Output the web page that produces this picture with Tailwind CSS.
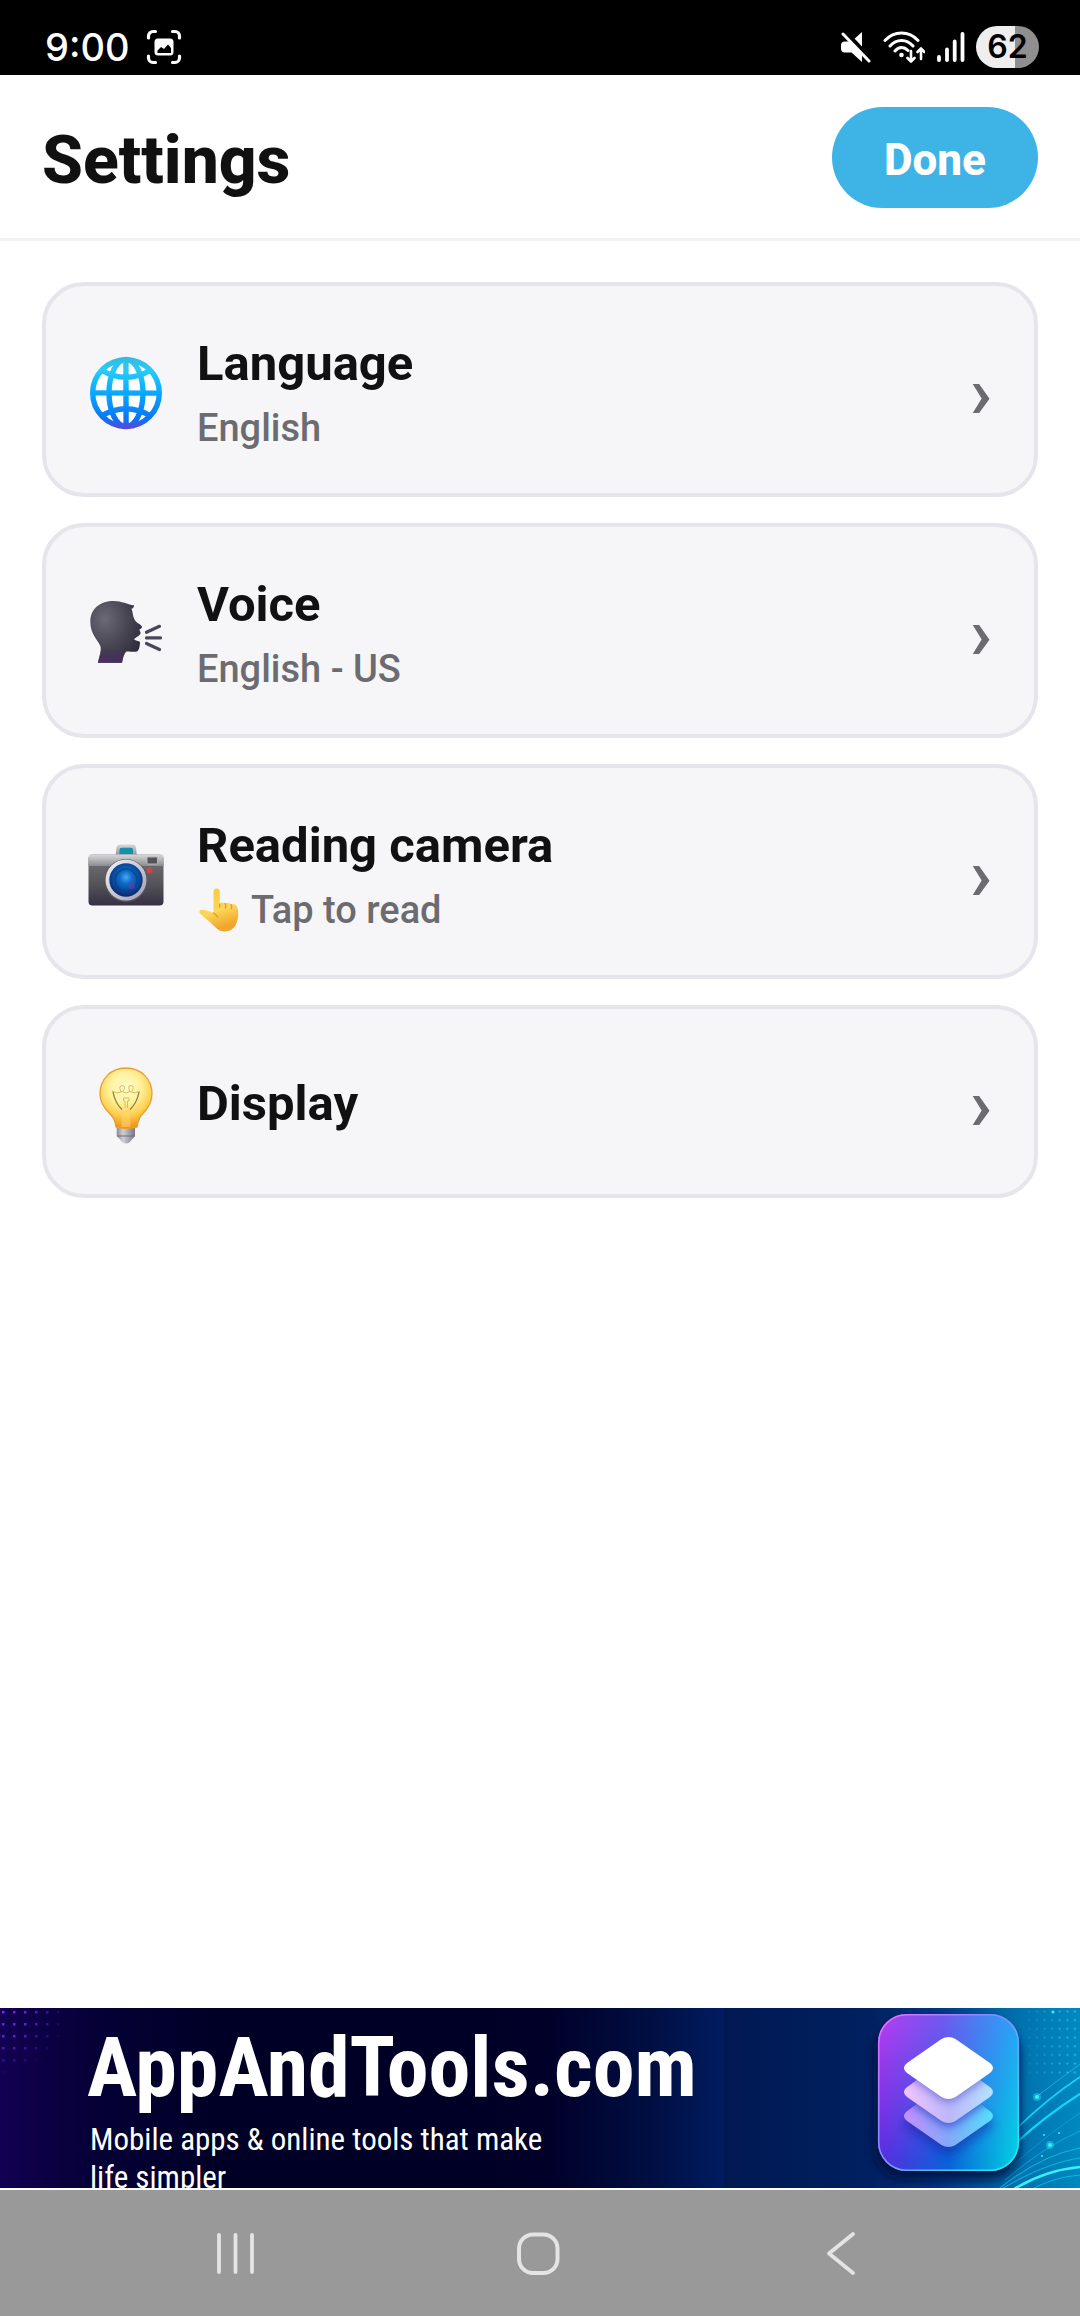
<!DOCTYPE html>
<html lang="en">
<head>
    <meta charset="UTF-8">
    <meta name="viewport" content="width=device-width, initial-scale=1.0">
    <title>Settings</title>
    <script src="https://cdn.jsdelivr.net/npm/@tailwindcss/browser@4"></script>
</head>
<body class="min-h-screen flex flex-col bg-white text-[#111111] font-['Roboto',sans-serif]">

    <!-- Status bar -->
    <div class="h-[75px] bg-black text-white pl-[45px] pr-[41px] pt-[19px] flex items-center justify-between font-['Inter',sans-serif]">
        <div class="flex items-center gap-[16px]">
            <span class="text-[38px] leading-[56px] font-medium">9:00</span>
            <svg class="w-[36px] h-[36px]" viewBox="0 0 36 36" fill="none" stroke="#fff" stroke-width="3.2" stroke-linecap="round">
                <path d="M2.500 9V7a4.500 4.500 0 0 1 4.500-4.500h2.500M26.500 2.500H29a4.500 4.500 0 0 1 4.500 4.500v2M33.500 27v2a4.500 4.500 0 0 1-4.500 4.500h-2.500M9.500 33.500H7A4.500 4.500 0 0 1 2.500 29v-2"/>
                <rect x="8.500" y="9.500" width="19" height="17" rx="3.500" fill="#fff" stroke="none"/>
                <path d="M11.500 24v-2.500l3.500-3.500 3 2 4-4.500 3 3.500v5z" fill="#000" stroke="none"/>
            </svg>
        </div>
        <div class="flex items-center gap-[11px]">
            <svg class="w-[32px] h-[32px]" viewBox="0 0 32 32">
                <path d="M22 1v30L11.500 21.500H5a4 4 0 0 1-4-4v-3a4 4 0 0 1 4-4h6.500z" fill="#fff"/>
                <path d="M5 1l27 29" stroke="#000" stroke-width="5"/>
                <path d="M3 3l26 27" stroke="#fff" stroke-width="3" stroke-linecap="round"/>
            </svg>
            <svg class="w-[42px] h-[32px]" viewBox="0 0 42 32" fill="none" stroke="#fff" stroke-width="3" stroke-linecap="round" stroke-linejoin="round">
                <path d="M2 9.500C11 -.500 26 -.500 35 9.500M7 15C13.500 7.500 23.500 7.500 30 15M12 20c4-4.500 9-4.500 13-.500"/>
                <circle cx="18.500" cy="24" r="2.300" fill="#fff" stroke="none"/>
                <path d="M28 20v10M24.500 27l3.500 3.500 3.500-3.500M38 28V18M34.500 21l3.500-3.500 3.500 3.500" stroke-width="2.600"/>
            </svg>
            <svg class="w-[29px] h-[32px]" viewBox="0 0 29 32" stroke="#fff" stroke-width="3.800" stroke-linecap="round">
                <path d="M3 26v3M11 18.500V29M18.700 10.500V29M26.500 3v26"/>
            </svg>
            <span class="w-[63px] h-[42px] rounded-full bg-linear-to-r from-[#eeeeee] from-62% to-[#8f8f8f] to-62% text-black text-[32px] leading-[42px] font-semibold text-center">62</span>
        </div>
    </div>

    <!-- Header -->
    <header class="h-[166px] px-[42px] pt-[2px] border-b-3 border-[#f2f2f4] flex items-center justify-between">
        <h1 class="pt-[6px] text-[66px] leading-[78px] font-extrabold">Settings</h1>
        <button type="button" class="h-[101px] px-[52px] pt-1 rounded-full bg-[#3db3e6] text-white text-[44px] font-extrabold">Done</button>
    </header>

    <main class="flex-1 px-[42px] pt-[41px] flex flex-col gap-[26px]">
        <button type="button" class="w-full pt-[42px] pb-[41px] px-[42px] rounded-[42px] border-4 border-[#e5e5ec] bg-[#f6f6f9] flex items-center gap-[33px] text-left">
            <svg class="w-[76px] h-[84px]" viewBox="0 0 76 84" fill="none">
                <defs>
                    <linearGradient id="globe" gradientUnits="userSpaceOnUse" x1="0" y1="9" x2="0" y2="82">
                        <stop offset="0" stop-color="#35b9e0"/>
                        <stop offset=".18" stop-color="#27ccf8"/>
                        <stop offset=".5" stop-color="#08a8ff"/>
                        <stop offset=".85" stop-color="#0b74f2"/>
                        <stop offset="1" stop-color="#6a3fd6"/>
                    </linearGradient>
                </defs>
                <circle cx="38" cy="45" r="33.500" fill="#fff"/>
                <g stroke="url(#globe)" stroke-width="5.400">
                    <circle cx="38" cy="45" r="33.300"/>
                    <ellipse cx="38" cy="45" rx="17" ry="33.500"/>
                    <path d="M4 44.900L72 45.100M37.900 12L38.100 79M13 22Q38 36.500 63 22M13 68Q38 53.500 63 68"/>
                </g>
            </svg>
            <span class="flex-1 pt-1">
                <span class="block text-[49px] leading-[64px] font-bold">Language</span>
                <span class="block mt-2 text-[38px] leading-[48px] font-medium text-[#6c6c70]">English</span>
            </span>
            <span class="pt-[6px] text-[74px] leading-[72px] font-semibold text-[#6c6c70]">›</span>
        </button>

        <button type="button" class="w-full pt-[42px] pb-[41px] px-[42px] rounded-[42px] border-4 border-[#e5e5ec] bg-[#f6f6f9] flex items-center gap-[33px] text-left">
            <svg class="w-[76px] h-[84px]" viewBox="0 0 76 84" fill="none">
                <defs>
                    <radialGradient id="head" cx=".28" cy=".3" r=".8">
                        <stop offset="0" stop-color="#6b6975"/>
                        <stop offset=".55" stop-color="#484653"/>
                        <stop offset="1" stop-color="#2f2b3d"/>
                    </radialGradient>
                    <linearGradient id="neck" x1="0" y1="0" x2="0" y2="1">
                        <stop offset=".1" stop-color="#4a2f63" stop-opacity="0"/>
                        <stop offset="1" stop-color="#4a2f63"/>
                    </linearGradient>
                </defs>
                <path d="M10 73.700C11.500 67 13.500 61 12.500 57.500C11 52 2.300 46 2.300 32.700C2.300 19 13 12 25.500 12C34 12 39 15.500 46 16.300C46 18.500 45 19.500 43.500 19.800C45 23 44.500 27 46.500 30.500C48 33.500 51 34.500 53.700 37C54.500 38.500 53 40 51.300 40.500C51.500 42 53 43 52.500 44.500C51.500 47 48 48 46 50.300C48 52 50 52 52 52.700C52 56 51.500 60 49.500 62.200C46 63.500 41 62 38.500 62.500C36 64.500 35 69 34 73.700Z" fill="url(#head)"/>
                <path d="M10 73.700C11.500 67 13.500 61 12.500 57.500L38.500 62.500C36 64.500 35 69 34 73.700Z" fill="url(#neck)"/>
                <path d="M58.500 43.300L71.500 37.300M58.500 48.900H72.500M58.500 54.500L71.500 60.500" stroke="#494659" stroke-width="3.200" stroke-linecap="round"/>
            </svg>
            <span class="flex-1 pt-1">
                <span class="block text-[49px] leading-[64px] font-bold">Voice</span>
                <span class="block mt-2 text-[38px] leading-[48px] font-medium text-[#6c6c70]">English - US</span>
            </span>
            <span class="pt-[6px] text-[74px] leading-[72px] font-semibold text-[#6c6c70]">›</span>
        </button>

        <button type="button" class="w-full pt-[42px] pb-[41px] px-[42px] rounded-[42px] border-4 border-[#e5e5ec] bg-[#f6f6f9] flex items-center gap-[33px] text-left">
            <svg class="w-[76px] h-[84px]" viewBox="0 0 76 84" fill="none">
                <defs>
                    <linearGradient id="camTop" x1="0" y1="0" x2="0" y2="1">
                        <stop offset="0" stop-color="#d9d9dc"/>
                        <stop offset="1" stop-color="#8c8c90"/>
                    </linearGradient>
                    <linearGradient id="camBody" x1="0" y1="0" x2="0" y2="1">
                        <stop offset="0" stop-color="#77777a"/>
                        <stop offset=".6" stop-color="#525257"/>
                        <stop offset="1" stop-color="#353044"/>
                    </linearGradient>
                    <linearGradient id="camRing" x1="0" y1="0" x2="1" y2="1">
                        <stop offset="0" stop-color="#f4f4f8"/>
                        <stop offset="1" stop-color="#9e9dae"/>
                    </linearGradient>
                    <radialGradient id="camLens" cx=".5" cy=".42" r=".55">
                        <stop offset="0" stop-color="#4aa8ee"/>
                        <stop offset=".35" stop-color="#0b6cc8"/>
                        <stop offset=".75" stop-color="#07479b"/>
                        <stop offset="1" stop-color="#12296f"/>
                    </radialGradient>
                </defs>
                <path d="M27.500 26L28.500 17.500Q29 14.500 32 14.500H44.500Q47.500 14.500 48 17.500L49 26Z" fill="url(#camTop)"/>
                <path d="M31.500 24.500V20Q31.500 17.800 33.500 17.800H43Q45 17.800 45 20V24.500Z" fill="#1590ad"/>
                <rect x=".500" y="24.500" width="75" height="51" rx="4" fill="url(#camBody)"/>
                <path d="M.500 36V28.500Q.500 24.500 4.500 24.500H71.500Q75.500 24.500 75.500 28.500V36Z" fill="url(#camTop)"/>
                <rect x="59" y="27" width="10.500" height="7" rx="1" fill="#525257" stroke="#b8b8bc"/>
                <circle cx="61.500" cy="40.500" r="3" fill="#d3434c"/>
                <circle cx="38" cy="50.500" r="21.500" fill="#55555a"/>
                <circle cx="38" cy="50" r="20.500" fill="url(#camRing)"/>
                <circle cx="38" cy="50" r="16.700" fill="url(#camLens)"/>
                <circle cx="38" cy="50" r="11" stroke="#083e80" stroke-width="1.500" opacity=".7"/>
                <circle cx="43.500" cy="55.500" r="3.500" fill="#5b42b8" opacity=".6"/>
            </svg>
            <span class="flex-1 pt-1">
                <span class="block text-[49px] leading-[64px] font-bold">Reading camera</span>
                <span class="mt-2 flex items-center gap-[12px] pl-[2px] text-[38px] leading-[48px] font-medium text-[#6c6c70]">
                    <svg class="w-[40px] h-[44px]" viewBox="0 0 40 44">
                        <defs>
                            <linearGradient id="hand" x1="0" y1="0" x2=".3" y2="1">
                                <stop offset="0" stop-color="#fbc83e"/>
                                <stop offset=".6" stop-color="#fdd658"/>
                                <stop offset="1" stop-color="#f0a52b"/>
                            </linearGradient>
                        </defs>
                        <path d="M14.500 25V4Q14.500 .500 17.500 .500Q20.800 .500 20.800 4V16Q23 13.500 26 15.500Q29.500 13.500 32 16.500Q36 15 38 18.500C40 23 39.500 30 37.500 35C35.500 40.500 31 43.500 26 43.500C20 43.500 17 40 13.500 36.500C10 33 5 29.500 1 25.500C-.500 23.500 1 21.500 3.500 21.800C7.500 22.300 11 23.300 14.500 25Z" fill="url(#hand)"/>
                        <path d="M20.800 16V19M26 15.500Q27.300 17.500 26.500 20M32 16.500Q33.500 18.500 32.500 21M14.500 25Q17 26.500 18.500 29" fill="none" stroke="#e39a22" stroke-width="1.300" stroke-linecap="round"/>
                    </svg>
                    Tap to read
                </span>
            </span>
            <span class="pt-[6px] text-[74px] leading-[72px] font-semibold text-[#6c6c70]">›</span>
        </button>

        <button type="button" class="w-full min-h-[193px] px-[42px] rounded-[42px] border-4 border-[#e5e5ec] bg-[#f6f6f9] flex items-center gap-[33px] text-left">
            <svg class="w-[76px] h-[84px]" viewBox="0 0 76 84" fill="none">
                <defs>
                    <radialGradient id="bulb" gradientUnits="userSpaceOnUse" cx="37" cy="28" r="40">
                        <stop offset="0" stop-color="#fffbd0"/>
                        <stop offset=".4" stop-color="#fff19a"/>
                        <stop offset=".68" stop-color="#fcd052"/>
                        <stop offset="1" stop-color="#f0901a"/>
                    </radialGradient>
                    <linearGradient id="cap" x1="0" y1="0" x2="1" y2="0">
                        <stop offset="0" stop-color="#8d8b97"/>
                        <stop offset=".35" stop-color="#d0cfd6"/>
                        <stop offset="1" stop-color="#777581"/>
                    </linearGradient>
                </defs>
                <path d="M28.700 66H47V76L43 80.500Q41.500 83.500 38 83.500Q34.500 83.500 33 80.500L28.700 76Z" fill="url(#cap)"/>
                <path d="M29 76H47" stroke="#6f6d7b" stroke-width="1"/>
                <path d="M12 34C12 19 23 8 38 8C53 8 64 19 64 34C64 43 59.500 49 54.500 54C50.500 58 50 61.500 49 67Q38 69.500 28 67C27 61.500 26.500 58 22 54C17 49 12 43 12 34Z" fill="url(#bulb)" stroke="#e5a02f" stroke-width="1.300"/>
                <path d="M33.500 50H42.500V67H33.500Z" fill="#ffd66e" opacity=".55"/>
                <path d="M25 32Q27 43 34 49.500M51 32Q49 43 42 49.500" stroke="#8a7a45" stroke-width="1.300"/>
                <path d="M24 31L29 33L34 31.500L38 33L42 31.500L47 33L52 31M33 32Q30 25.500 34.500 25.500Q38 26 35.500 31M42 32Q39 25.500 43 25.500Q47 26 44 31M35.500 38H41V41H39.500V48M35.500 38V41H37V48" stroke="#d6bd58" stroke-width="1"/>
            </svg>
            <span class="flex-1 pt-1 text-[49px] leading-[64px] font-bold">Display</span>
            <span class="pt-[6px] text-[74px] leading-[72px] font-semibold text-[#6c6c70]">›</span>
        </button>
    </main>

    <!-- Ad banner -->
    <a href="#" class="relative block h-[180px] overflow-hidden bg-[#00002a] text-white">
        <svg class="absolute inset-0 w-full h-full" viewBox="0 0 1080 180" preserveAspectRatio="xMaxYMid slice" fill="none">
            <defs>
                <linearGradient id="bgLeft" x1="0" y1="0" x2="1" y2="0">
                    <stop offset="0" stop-color="#120052"/>
                    <stop offset=".13" stop-color="#060036"/>
                    <stop offset=".3" stop-color="#000026"/>
                    <stop offset=".75" stop-color="#000028"/>
                    <stop offset=".9" stop-color="#000f42"/>
                    <stop offset="1" stop-color="#001c60"/>
                </linearGradient>
                <linearGradient id="bgRight" x1="0" y1="0" x2="1" y2="0">
                    <stop offset="0" stop-color="#001953"/>
                    <stop offset=".4" stop-color="#00205f"/>
                    <stop offset=".6" stop-color="#00357f"/>
                    <stop offset=".82" stop-color="#0070ad"/>
                    <stop offset="1" stop-color="#0089c0"/>
                </linearGradient>
                <radialGradient id="fade" gradientUnits="userSpaceOnUse" cx="0" cy="0" r="76">
                    <stop offset="0" stop-color="#fff"/>
                    <stop offset=".4" stop-color="#ccc"/>
                    <stop offset=".9" stop-color="#000"/>
                </radialGradient>
                <linearGradient id="fadeRight" x1="1" y1="0" x2="0" y2="0">
                    <stop offset="0" stop-color="#fff"/>
                    <stop offset="1" stop-color="#333"/>
                </linearGradient>
                <pattern id="dots" width="11" height="12" patternUnits="userSpaceOnUse">
                    <rect x="2" y="3" width="2.500" height="2.500" fill="#8420ff"/>
                </pattern>
                <pattern id="dotsRight" x="1004" width="7.600" height="8.700" patternUnits="userSpaceOnUse">
                    <circle cx="2.500" cy="3.500" r="1" fill="#2fd0e8"/>
                </pattern>
                <mask id="m1"><rect width="76" height="76" fill="url(#fade)"/></mask>
                <mask id="m2"><rect x="1028" width="52" height="68" fill="url(#fadeRight)"/></mask>
                <linearGradient id="tileA" x1="0" y1="0" x2="1" y2="0">
                    <stop offset="0" stop-color="#b23cf0"/>
                    <stop offset=".45" stop-color="#6d58ef"/>
                    <stop offset="1" stop-color="#23a8f6"/>
                </linearGradient>
                <linearGradient id="tileB" x1="0" y1="0" x2="1" y2="0">
                    <stop offset="0" stop-color="#5a2be0"/>
                    <stop offset=".5" stop-color="#0a63da"/>
                    <stop offset="1" stop-color="#00d2e0"/>
                </linearGradient>
                <linearGradient id="down" x1="0" y1="0" x2="0" y2="1">
                    <stop offset=".1" stop-color="#000"/>
                    <stop offset=".85" stop-color="#fff"/>
                </linearGradient>
                <mask id="m3"><rect x="870" width="160" height="180" fill="url(#down)"/></mask>
                <linearGradient id="rim" x1="0" y1="0" x2="1" y2="1">
                    <stop offset="0" stop-color="#ec6bff"/>
                    <stop offset=".45" stop-color="#7f8cff"/>
                    <stop offset="1" stop-color="#16f0f5"/>
                </linearGradient>
                <linearGradient id="layer2" x1="0" y1="0" x2="1" y2="0">
                    <stop offset="0" stop-color="#efc4ff"/>
                    <stop offset=".5" stop-color="#bdb8fa"/>
                    <stop offset="1" stop-color="#b4e2ff"/>
                </linearGradient>
                <linearGradient id="layer3" x1="0" y1="0" x2="1" y2="0">
                    <stop offset="0" stop-color="#c48fff"/>
                    <stop offset=".5" stop-color="#84a8f8"/>
                    <stop offset="1" stop-color="#55e0ff"/>
                </linearGradient>
                <filter id="blur" x="-30%" y="-30%" width="160%" height="160%"><feGaussianBlur stdDeviation="5"/></filter>
                <path id="slab" d="M-7 -29Q0 -33 7 -29L40 -6Q49 0 40 6L7 29Q0 33 -7 29L-40 6Q-49 0 -40 -6Z"/>
                <clipPath id="clip2"><use href="#slab" x="948.500" y="84"/></clipPath>
                <clipPath id="clip3"><use href="#slab" x="948.500" y="108"/></clipPath>
            </defs>
            <rect width="724" height="180" fill="url(#bgLeft)"/>
            <rect x="724" width="356" height="180" fill="url(#bgRight)"/>
            <rect width="76" height="76" fill="url(#dots)" mask="url(#m1)"/>
            <rect x="1028" width="52" height="68" fill="url(#dotsRight)" mask="url(#m2)"/>

            <!-- light trails -->
            <g stroke="#10d8f4" stroke-linecap="round">
                <path d="M1015 136Q1045 108 1080 86" stroke-width="2.200"/>
                <path d="M1015 122Q1048 90 1080 69" stroke-width="1.600"/>
                <path d="M1036 89L1080 56" stroke-width="1" opacity=".6"/>
                <path d="M1010 160Q1045 128 1080 105" stroke-width="1" opacity=".35"/>
                <path d="M1005 172Q1045 138 1080 123" stroke-width="1" opacity=".5"/>
                <path d="M1000 180Q1040 148 1080 140" stroke-width="1.200" opacity=".6"/>
                <path d="M1000 182Q1045 155 1080 150" stroke-width="1.200" opacity=".6"/>
                <path d="M1014 181Q1046 162 1080 159" stroke="#3bf0ff" stroke-width="2.500"/>
                <path d="M1030 182Q1054 169 1080 167" stroke-width="1" opacity=".6"/>
            </g>
            <g fill="#2ff2ff">
                <circle cx="1037" cy="89" r="4" opacity=".4"/><circle cx="1037" cy="89" r="2"/>
                <circle cx="1050" cy="137" r="4" opacity=".4"/><circle cx="1050" cy="137" r="2"/>
                <circle cx="1053" cy="4" r="1.500"/><circle cx="1044" cy="127" r="1"/><circle cx="1059" cy="125" r="1"/><circle cx="1042" cy="148" r="1"/>
            </g>

            <!-- app tile -->
            <rect x="874" y="14" width="146" height="158" rx="30" fill="#00103c" opacity=".8" filter="url(#blur)"/>
            <rect x="878" y="6" width="141" height="157" rx="29" fill="url(#tileA)"/>
            <rect x="878" y="6" width="141" height="157" rx="29" fill="url(#tileB)" mask="url(#m3)"/>
            <rect x="878.700" y="6.700" width="139.600" height="155.600" rx="28" stroke="url(#rim)" stroke-width="1.600"/>
            <use href="#slab" x="948.500" y="116" fill="#0a1f9a" opacity=".45" filter="url(#blur)"/>
            <use href="#slab" x="948.500" y="108" fill="url(#layer3)"/>
            <g clip-path="url(#clip3)"><use href="#slab" x="948.500" y="88" fill="#2a3cc8" opacity=".7" filter="url(#blur)"/></g>
            <use href="#slab" x="948.500" y="84" fill="url(#layer2)"/>
            <g clip-path="url(#clip2)"><use href="#slab" x="948.500" y="63" fill="#4a45cc" opacity=".6" filter="url(#blur)"/></g>
            <use href="#slab" x="948.500" y="60" fill="#fff"/>
        </svg>
        <span class="relative block pl-[87px] pt-[14px] font-['Roboto_Condensed','Roboto',sans-serif]">
            <span class="block text-[84px] leading-[92px] font-bold">AppAndTools.com</span>
            <span class="block w-[470px] pl-[3px] pt-[7px] text-[31px] leading-[38px]">Mobile apps &amp; online tools that make life simpler</span>
        </span>
    </a>

    <!-- Navigation bar -->
    <nav class="h-[128px] border-t-2 border-white bg-[#999999] pl-[84px] pr-[88px] grid grid-cols-3">
        <button type="button" aria-label="Recents" class="flex items-center justify-center">
            <svg class="w-[44px] h-[48px]" viewBox="0 0 44 48" stroke="#e4e4e4" stroke-width="3.800" stroke-linecap="round">
                <path d="M6 6V43M22.500 6V43M39 6V43"/>
            </svg>
        </button>
        <button type="button" aria-label="Home" class="flex items-center justify-center">
            <svg class="w-[48px] h-[48px]" viewBox="0 0 48 48" fill="none" stroke="#e4e4e4" stroke-width="4">
                <rect x="5" y="5.500" width="38.500" height="38.500" rx="14"/>
            </svg>
        </button>
        <button type="button" aria-label="Back" class="flex items-center justify-center">
            <svg class="w-[34px] h-[48px]" viewBox="0 0 34 48" fill="none" stroke="#e4e4e4" stroke-width="3.800" stroke-linecap="round" stroke-linejoin="round">
                <path d="M29 5L5 24.500L29 44"/>
            </svg>
        </button>
    </nav>
</body>
</html>
